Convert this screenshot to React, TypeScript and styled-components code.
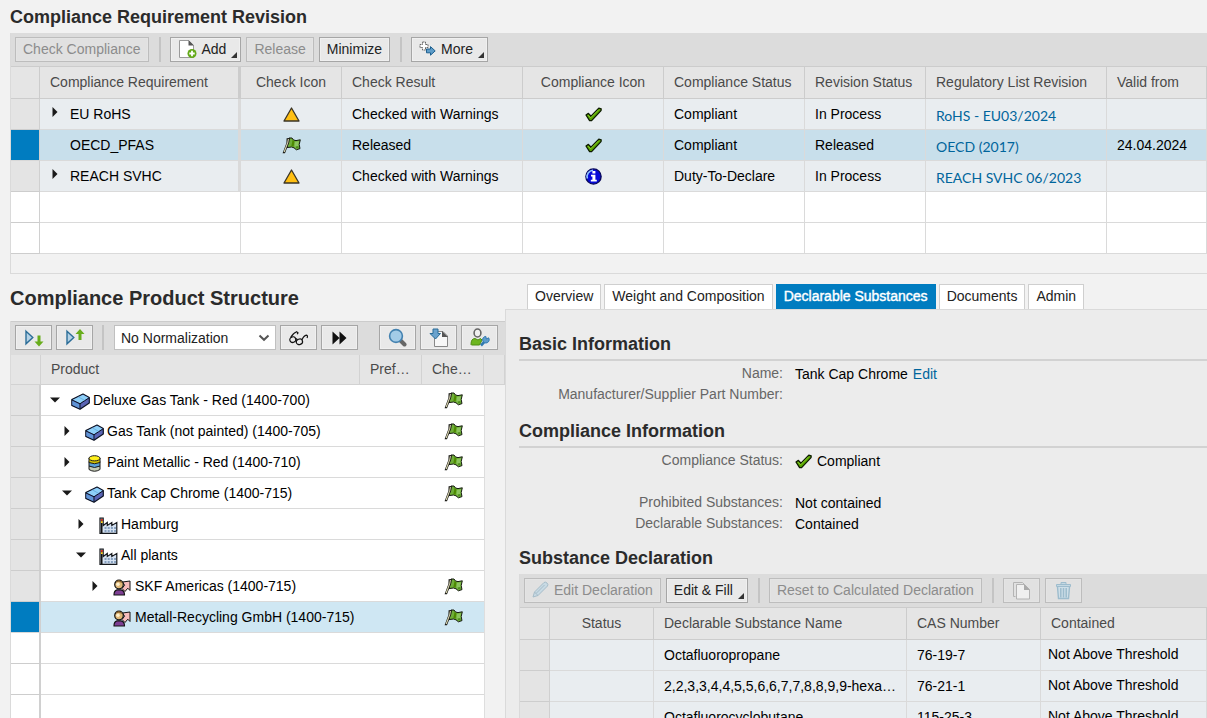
import React from 'react';
import styled, { createGlobalStyle, css } from 'styled-components';

const color = {
  page: '#f2f2f2',
  bar: '#dcdcdc',
  head: '#e5e5e5',
  row: '#e9edf0',
  line: '#dadada',
  headLine: '#cccccc',
  accent: '#007cc0',
  link: '#00659c',
  panel: '#ececec',
};

const GlobalStyle = createGlobalStyle`
  *, *::before, *::after { box-sizing: border-box; }
  body {
    margin: 0;
    background: ${color.page};
    color: #000;
    font: 14px/20px "Liberation Sans", Arial, sans-serif;
    overflow: hidden;
  }
  button, select { font: inherit; color: inherit; }
  svg { display: block; flex: none; }
`;

const Page = styled.main`
  display: flex;
  flex-direction: column;
  height: 100vh;
  padding-left: 10px;
  overflow: hidden;
`;

const Heading = styled.h2<{ $large?: boolean }>`
  margin: 0;
  color: #2b2b2b;
  font-size: ${p => (p.$large ? 20 : 18)}px;
  line-height: 24px;
  font-weight: bold;
`;

const RevisionSection = styled.section`
  flex: none;
  padding-top: 5px;
`;

const TablePanel = styled.div`
  margin-top: 4px;
  padding-bottom: 19px;
  border-left: 1px solid ${color.line};
  border-bottom: 1px solid ${color.line};
  overflow: hidden;
`;

const Toolbar = styled.div<{ $lined?: boolean }>`
  display: flex;
  align-items: center;
  gap: ${p => (p.$lined ? 4 : 5)}px;
  height: ${p => (p.$lined ? 34 : 33)}px;
  padding: ${p => (p.$lined ? '0 0 2px 4px' : '0 0 0 4px')};
  background: ${color.bar};
  border-top: ${p => (p.$lined ? `1px solid ${color.headLine}` : '0')};
`;

const Divider = styled.span`
  width: 2px;
  height: 25px;
  margin: 0 4px 0 5px;
  background: #c4c4c4;
`;

const ToolButton = styled.button<{ $icon?: boolean; $menu?: boolean }>`
  display: flex;
  flex: none;
  align-items: center;
  justify-content: center;
  gap: 5px;
  height: 25px;
  width: ${p => (p.$icon ? '37px' : 'auto')};
  padding: ${p => (p.$icon ? '0' : p.$menu ? '0 3px 2px 7px' : '0 7px 2px')};
  border: 1px solid #a6a6a6;
  border-radius: 0;
  background: #e9e9e9;
  box-shadow: inset 0 0 0 1px #f0f0f0;
  color: #222;
  white-space: nowrap;

  &:disabled {
    border-color: #bdbdbd;
    background: #e1e1e1;
    box-shadow: inset 0 0 0 1px #e4e4e4;
    color: #8c8c8c;
  }

  ${p => p.$menu && css`
    &::after {
      content: '';
      align-self: flex-end;
      margin-bottom: 1px;
      border-left: 6px solid transparent;
      border-bottom: 6px solid #333;
    }
  `}
`;

const Table = styled.table`
  width: 100%;
  border-collapse: separate;
  border-spacing: 0;
  table-layout: fixed;
`;

const HeadCell = styled.th<{ $center?: boolean; $frozen?: boolean; $tree?: boolean }>`
  height: ${p => (p.$tree ? 30 : 33)}px;
  padding: ${p => (p.$center ? '0 0 2px' : '0 10px 2px')};
  border: 0 solid ${p => (p.$tree ? '#d2d2d2' : color.headLine)};
  border-width: ${p => (p.$tree ? '0 1px 1px 0' : '1px 1px 1px 0')};
  ${p => p.$frozen && css`border-right: 3px solid ${color.headLine};`}
  background: ${color.head};
  color: #4a4a4a;
  font-weight: normal;
  text-align: ${p => (p.$center ? 'center' : 'left')};
  white-space: nowrap;
  overflow: hidden;
`;

type RowState = 'filled' | 'selected' | 'empty';

const rowFill: Record<RowState, string> = {
  filled: color.row,
  selected: '#c8dfeb',
  empty: '#fff',
};

const BodyCell = styled.td<{ $state: RowState; $frozen?: boolean; $center?: boolean; $tight?: boolean }>`
  height: 31px;
  padding: ${p => (p.$center ? '0' : p.$tight ? '0 7px 2px' : '0 10px')};
  border-right: ${p => (p.$frozen && p.$state !== 'empty' ? 3 : 1)}px solid ${color.line};
  border-bottom: 1px solid ${color.line};
  background: ${p => rowFill[p.$state]};
  white-space: nowrap;
  overflow: hidden;

  & > svg { margin: 0 auto; }
`;

const SelectorCell = styled.td<{ $state: RowState; $tree?: boolean }>`
  height: 31px;
  padding: 0;
  border-right: ${p => (p.$tree ? 2 : 1)}px solid #d0d0d0;
  border-bottom: 1px solid ${p => (p.$state === 'selected' ? '#d8d8d8' : '#cdcdcd')};
  background: ${p => (p.$state === 'selected' ? color.accent : p.$state === 'filled' ? '#e4e4e4' : '#fff')};
`;

const Expandable = styled.div`
  display: flex;
  align-items: center;
`;

const Toggle = styled.button`
  display: flex;
  align-items: center;
  justify-content: center;
  width: 10px;
  height: 16px;
  padding: 0;
  border: 0;
  background: none;
`;

const ToggleSlot = styled.span`
  display: flex;
  flex: none;
  width: 20px;
  height: 20px;
`;

const ListLink = styled.a`
  display: block;
  padding-top: 3px;
  color: ${color.link};
  font: 14px/20px Lato, Carlito, sans-serif;
  text-decoration: none;
`;

const TextLink = styled.a`
  color: ${color.link};
  text-decoration: none;
`;

const Split = styled.div`
  display: flex;
  flex: 1;
  min-height: 0;
`;

const StructureSection = styled.section`
  flex: none;
  width: 495px;
  padding-top: 12px;
`;

const StructurePanel = styled.div`
  margin-top: 11px;
  border-left: 1px solid ${color.line};
`;

const Gap = styled.span`
  width: 13px;
`;

const SelectBox = styled.label`
  display: grid;
  align-items: center;
  margin-left: 2px;
  width: 162px;
  height: 25px;

  & > select, & > svg { grid-area: 1 / 1; }
  & > svg { justify-self: end; margin-right: 6px; pointer-events: none; }
`;

const Select = styled.select`
  appearance: none;
  width: 100%;
  height: 25px;
  padding: 0 24px 0 6px;
  border: 1px solid #c0c0c0;
  border-radius: 0;
  background: #fff;
  color: #222;
`;

const TreeCell = styled.td<{ $state: RowState }>`
  height: 31px;
  padding: 0;
  border-bottom: 1px solid ${color.line};
  background: ${p => (p.$state === 'selected' ? '#cfe7f3' : '#fff')};

  & > svg { margin: 0 auto; }
`;

const GutterCell = styled.td`
  padding: 0;
  border-left: 1px solid #dedede;
`;

const TreeItem = styled.div<{ $level: number }>`
  display: flex;
  align-items: center;
  padding-left: ${p => (p.$level === 0 ? 9 : 7 + 14 * p.$level)}px;

  & > button, & > i { flex: none; width: 10px; margin-right: ${p => (p.$level === 0 ? 11 : 13)}px; }
  & > svg { margin-right: 3px; margin-top: 3px; }
`;

const DetailSection = styled.section`
  display: flex;
  flex: 1;
  flex-direction: column;
  min-width: 0;
  padding-top: 10px;
`;

const Tabs = styled.div`
  display: flex;
  gap: 3px;
  padding-left: 22px;
`;

const Tab = styled.button<{ $active?: boolean }>`
  height: 25px;
  padding: 0 7px 2px;
  border: 1px solid ${p => (p.$active ? color.accent : '#cfcfcf')};
  border-bottom-width: 0;
  background: ${p => (p.$active ? color.accent : '#fff')};
  color: ${p => (p.$active ? '#fff' : '#222')};
  -webkit-text-stroke: ${p => (p.$active ? '0.4px #fff' : '0')};
  white-space: nowrap;
`;

const DetailPanel = styled.div`
  flex: 1;
  min-height: 0;
  padding: 22px 0 0 13px;
  border: 1px solid ${color.line};
  border-width: 1px 0 0 1px;
  background: ${color.panel};
  overflow: hidden;
`;

const SectionTitle = styled(Heading)`
  height: 29px;
  border-bottom: 2px solid #d2d2d2;
`;

const Fields = styled.dl<{ $last?: boolean }>`
  display: grid;
  grid-template-columns: 264px 1fr;
  grid-auto-rows: 21px;
  column-gap: 12px;
  margin: 2px 0 ${p => (p.$last ? 12 : 14)}px;

  & > dt { color: #666; text-align: right; }
  & > dd { display: flex; align-items: center; gap: 5px; margin: 0; padding-top: 1px; }
`;

/* ---------- icons ---------- */

const RightArrow = () => (
  <svg width="6" height="10" viewBox="0 0 6 10"><path d="M0.5 0L5.5 5L0.5 10Z" fill="#1a1a1a" /></svg>
);
const DownArrow = () => (
  <svg width="10" height="6" viewBox="0 0 10 6"><path d="M0 .5H10L5 5.5Z" fill="#1a1a1a" /></svg>
);
const WarningIcon = () => (
  <svg width="17" height="15" viewBox="0 0 17 15">
    <path d="M8.5 1L16 14H1Z" fill="#ffbf12" stroke="#3a3426" strokeWidth="1.3" strokeLinejoin="round" />
  </svg>
);
const FlagIcon = () => (
  <svg width="19" height="17" viewBox="0 0 19 17">
    <path d="M7 1L10 1L11.5 3L14 3.6L18.3 2.8L17.2 7.5L18 11.6L14.4 12.8L12 10.8L9.5 10L5 10.6Z" fill="#6fae38" stroke="#151a10" strokeLinejoin="round" />
    <path d="M10.6 2.8L12.4 4.2L11.6 9.8L9.4 9Z" fill="#4d8a00" />
    <path d="M13 5L17 4.2L16.2 7.6L16.8 10.6L14.4 11.4L12.6 9.8Z" fill="#8cc55e" />
    <path d="M13.4 9.6L16.4 9L16.8 10.8L14.4 11.6Z" fill="#4f8f1c" />
    <path d="M4.6 1.2L8 1L7.4 5L3 16.2H.6L4.4 6Z" fill="#1a1a16" />
    <path d="M6.4 2L5.8 5.4L2.2 15" fill="none" stroke="#d9d5b0" strokeWidth="1.1" />
  </svg>
);
const CheckIcon = () => (
  <svg width="17" height="15" viewBox="0 0 17 15">
    <path d="M1 8L3.4 6.4L6 9.2L13.8 1.2L16.2 1.8L16 3.6L6.6 13.6L4.6 13.6Z" fill="#58a700" stroke="#0d1a00" strokeWidth="1.3" strokeLinejoin="round" />
    <path d="M3 8.2L5.6 10.8L13.8 2.6" fill="none" stroke="#8fd02c" strokeWidth="1" />
  </svg>
);
const InfoIcon = () => (
  <svg width="17" height="17" viewBox="0 0 17 17">
    <circle cx="8.5" cy="8.5" r="7.6" fill="#0508d8" stroke="#07075a" strokeWidth="1.4" />
    <path d="M2.4 10.5A6.3 6.3 0 0 1 8 2.2" fill="none" stroke="#8fc2ff" strokeWidth="1.6" />
    <path d="M7.4 3H10.4V5.4H7.4ZM6 6.8H10.4V11.8H11.8V13.4H5.8V11.8H7.4V8.4H6Z" fill="#fff" />
  </svg>
);
const AddPageIcon = () => (
  <svg width="19" height="20" viewBox="0 0 19 20">
    <path d="M1.5 1.5H10.5L15.5 6.5V18.5H1.5Z" fill="#fff" stroke="#9a9a9a" />
    <path d="M10.5 1L16 6.5H10.5Z" fill="#555" />
    <circle cx="14" cy="14.5" r="4.5" fill="#63a918" />
    <path d="M14 11.8V17.2M11.3 14.5H16.7" stroke="#fff" strokeWidth="1.8" />
  </svg>
);
const MoreIcon = () => (
  <svg width="17" height="15" viewBox="0 0 17 15">
    <path d="M3.5 1H6.5V3.5H9V6.5H6.5V9H3.5V6.5H1V3.5H3.5Z" fill="#fff" stroke="#666" strokeDasharray="2 .6" />
    <path d="M7.5 8H11.5V5.6L16.2 9.9L11.5 14.2V11.8H7.5Z" fill="#5d9cc8" stroke="#1d5f8f" />
  </svg>
);
const ExpandIcon = ({ up }: { up?: boolean }) => (
  <svg width="20" height="18" viewBox="0 0 20 18">
    <path d="M2 2.2L8.8 8.5L2 14.8Z" fill="#b4d2e6" stroke="#2b6d98" strokeWidth="1.4" />
    {up
      ? <path d="M15 0L19.5 5H16.5V11H13.5V5H10.5Z" fill="#68ad1c" />
      : <path d="M15 17.6L19.5 12.6H16.5V6.6H13.5V12.6H10.5Z" fill="#68ad1c" />}
  </svg>
);
const GlassesIcon = () => (
  <svg width="20" height="16" viewBox="0 0 20 16" fill="none" stroke="#111" strokeWidth="1.2">
    <ellipse cx="3.8" cy="9.600" rx="3" ry="2.800" transform="rotate(-30 3.8 9.6)" />
    <ellipse cx="10.400" cy="11.800" rx="3.200" ry="2.700" transform="rotate(-20 10.4 11.8)" />
    <path d="M6.4 9.400Q7.600 8 8.400 9.800M1.600 7.600Q4 3.200 7.600 1.800L9 2.800L8.200 4.200M13 9.800Q14.800 5.600 17.400 5.200Q19.200 5.600 18 8" />
  </svg>
);
const ForwardIcon = () => (
  <svg width="15" height="14" viewBox="0 0 15 14"><path d="M.5 .5L7.5 7L.5 13.5ZM7.5 .5L14.5 7L7.5 13.5Z" fill="#111" /></svg>
);
const SearchIcon = () => (
  <svg width="19" height="19" viewBox="0 0 19 19">
    <path d="M12.5 12.5L16.5 16.5" stroke="#666" strokeWidth="4" strokeLinecap="round" />
    <circle cx="8" cy="8" r="6.4" fill="#a3cbe7" stroke="#4482b0" strokeWidth="1.6" />
  </svg>
);
const ImportIcon = () => (
  <svg width="20" height="20" viewBox="0 0 20 20">
    <path d="M5.5 5.5V18.5H18.5V8L14 3.5H9" fill="#f7f7f7" stroke="#888" />
    <path d="M13 3L19 9H13Z" fill="#555" />
    <path d="M4 1H9V5.5H11.5L6.5 11L1 5.5H4Z" fill="#6ba3cd" stroke="#2b6d98" />
  </svg>
);
const PersonalizeIcon = () => (
  <svg width="20" height="19" viewBox="0 0 20 19">
    <ellipse cx="7.5" cy="5" rx="3.4" ry="4" fill="#f0f0f0" stroke="#666" strokeWidth="1.6" />
    <path d="M1 16.5Q1 10.5 5 10.5L8 12L10.5 10.5L12 12L9.5 17H1.5Z" fill="#6db51f" stroke="#4f8c12" />
    <path d="M11 17.5L15 13.2" stroke="#3079b0" strokeWidth="2.6" />
    <path d="M18.6 9.8A3.3 3.3 0 1 1 15.8 8.4L16.4 11Z" fill="#5e9ccb" stroke="#3079b0" />
  </svg>
);
const ChevronIcon = () => (
  <svg width="12" height="8" viewBox="0 0 12 8"><path d="M1.5 1.5L6 5.8L10.5 1.5" fill="none" stroke="#555" strokeWidth="2" /></svg>
);
const PencilIcon = () => (
  <svg width="17" height="17" viewBox="0 0 17 17">
    <path d="M1 16L2.5 11L12 1.5Q13.5 .5 15 2T15.5 5L6 14.5Z" fill="#c8dae4" stroke="#a6bcc8" />
    <path d="M4 12.5L12.5 4" stroke="#a6bcc8" /><path d="M2.5 11L6 14.5" stroke="#a6bcc8" />
  </svg>
);
const CopyIcon = () => (
  <svg width="19" height="19" viewBox="0 0 19 19" fill="none">
    <path d="M3.5 15.5H1.5V1.5H10.5L12 3" stroke="#b4b4b4" />
    <path d="M4.5 3.5H12.5L17.5 8.5V18H4.5Z" fill="#f0f0f0" stroke="#b4b4b4" />
    <path d="M12 3L18 9H12Z" fill="#aaa" />
  </svg>
);
const TrashIcon = () => (
  <svg width="17" height="19" viewBox="0 0 17 19" fill="none" stroke="#9dbccd">
    <path d="M1.5 5.5H15.5V3.5H1.5ZM6 3.5V1.5H11V3.5" fill="#c4d8e3" />
    <path d="M2.5 6L3.5 17.5H13.5L14.5 6" fill="#cfdfe8" strokeWidth="1.4" />
    <path d="M5.8 7V16.5M8.5 7V16.5M11.2 7V16.5" strokeWidth="1.5" />
  </svg>
);
const BoxIcon = () => (
  <svg width="19" height="17" viewBox="0 0 19 17">
    <path d="M.8 6.600L12 1L18.300 4.600V10L9 16.300L.8 12.400Z" fill="#5a64b4" stroke="#0c1424" strokeWidth="1.200" strokeLinejoin="round" />
    <path d="M1.800 6.700L12 1.700L17.400 4.800L9 10.200Z" fill="#8ed0f8" />
    <path d="M1.400 7.600L8.600 11.200V15.300L1.400 12Z" fill="#5f94d6" />
    <path d="M9 16V10.800L18 4.900M9 10.800L1 7" fill="none" stroke="#0c1424" />
    <path d="M7.500 4L13.400 7.200" stroke="#5fa9dc" strokeWidth=".8" />
  </svg>
);
const BarrelIcon = () => (
  <svg width="19" height="17" viewBox="0 0 19 17" stroke="#1c1c1c">
    <path d="M4 11V14.5Q9.5 18 15 14.5V11Z" fill="#c4cbb4" />
    <path d="M4 6.5V11Q9.5 14 15 11V6.5Z" fill="#5ba0d8" />
    <path d="M4 3V7.5Q9.5 10 15 7.5V3Z" fill="#d6c400" />
    <ellipse cx="9.5" cy="3.3" rx="5.5" ry="2.6" fill="#fff01c" />
  </svg>
);
const FactoryIcon = () => (
  <svg width="19" height="17" viewBox="0 0 19 17">
    <path d="M1 16.4V1H4.2V8.5L8.3 5.5V8.5L12.8 5.5V8.5L17.8 5.5V16.4Z" fill="#d5e2f2" stroke="#15181c" strokeWidth="1.2" />
    <path d="M2.7 1.6V16" stroke="#111" strokeWidth="1.6" />
    <path d="M2.8 2V3.8" stroke="#e6321e" strokeWidth="1.8" />
    <path d="M2.8 4.2V6" stroke="#ffd21c" strokeWidth="1.8" />
    <path d="M5.5 11H17M5.5 14H17" stroke="#6d8aae" strokeWidth="1.6" strokeDasharray="2 1.2" />
  </svg>
);
const SupplierIcon = () => (
  <svg width="19" height="17" viewBox="0 0 19 17" stroke="#141414" strokeLinejoin="round">
    <path d="M9.5 3L17 2V11.5L14.8 9.200L12 12.500L9 9.500L11.600 6.200Z" fill="#f7bcbc" />
    <path d="M1 16Q1 11.500 4 10.800H8Q11.500 11.500 11.500 16Z" fill="#7e3f94" strokeWidth="1.2" />
    <circle cx="6" cy="5.500" r="4.300" fill="#e0b878" strokeWidth="1.2" />
    <path d="M3.400 3Q6 .8 8.800 3.400" fill="none" stroke="#8a6430" strokeWidth="1.3" />
    <circle cx="5" cy="5.200" r="1.700" fill="#fff0cc" stroke="none" />
  </svg>
);

/* ---------- data ---------- */

type Revision = {
  name: string; expandable?: boolean; check: React.ReactNode; result: string;
  compliance: React.ReactNode; status: string; revision: string; list: string; valid: string; selected?: boolean;
};

const revisions: Revision[] = [
  { name: 'EU RoHS', expandable: true, check: <WarningIcon />, result: 'Checked with Warnings', compliance: <CheckIcon />, status: 'Compliant', revision: 'In Process', list: 'RoHS - EU03/2024', valid: '' },
  { name: 'OECD_PFAS', check: <FlagIcon />, result: 'Released', compliance: <CheckIcon />, status: 'Compliant', revision: 'Released', list: 'OECD (2017)', valid: '24.04.2024', selected: true },
  { name: 'REACH SVHC', expandable: true, check: <WarningIcon />, result: 'Checked with Warnings', compliance: <InfoIcon />, status: 'Duty-To-Declare', revision: 'In Process', list: 'REACH SVHC 06/2023', valid: '' },
];

type Node = { label: string; level: number; icon: React.ReactNode; open?: boolean; leaf?: boolean; flag?: boolean; selected?: boolean };

const nodes: Node[] = [
  { label: 'Deluxe Gas Tank - Red (1400-700)', level: 0, icon: <BoxIcon />, open: true, flag: true },
  { label: 'Gas Tank (not painted) (1400-705)', level: 1, icon: <BoxIcon />, flag: true },
  { label: 'Paint Metallic - Red (1400-710)', level: 1, icon: <BarrelIcon />, flag: true },
  { label: 'Tank Cap Chrome (1400-715)', level: 1, icon: <BoxIcon />, open: true, flag: true },
  { label: 'Hamburg', level: 2, icon: <FactoryIcon /> },
  { label: 'All plants', level: 2, icon: <FactoryIcon />, open: true },
  { label: 'SKF Americas (1400-715)', level: 3, icon: <SupplierIcon />, flag: true },
  { label: 'Metall-Recycling GmbH (1400-715)', level: 3, icon: <SupplierIcon />, leaf: true, flag: true, selected: true },
];

const substances = [
  { name: 'Octafluoropropane', cas: '76-19-7' },
  { name: '2,2,3,3,4,4,5,5,6,6,7,7,8,8,9,9-hexa…', cas: '76-21-1' },
  { name: 'Octafluorocyclobutane', cas: '115-25-3' },
];

const tabs = ['Overview', 'Weight and Composition', 'Declarable Substances', 'Documents', 'Admin'];

/* ---------- sections ---------- */

function RevisionTable() {
  return (
    <Table>
      <colgroup>
        <col style={{ width: 29 }} /><col style={{ width: 201 }} /><col style={{ width: 101 }} />
        <col style={{ width: 181 }} /><col style={{ width: 141 }} /><col style={{ width: 141 }} />
        <col style={{ width: 121 }} /><col style={{ width: 181 }} /><col />
      </colgroup>
      <thead>
        <tr>
          <HeadCell aria-label="Selection" />
          <HeadCell $frozen>Compliance Requirement</HeadCell>
          <HeadCell $center>Check Icon</HeadCell>
          <HeadCell>Check Result</HeadCell>
          <HeadCell $center>Compliance Icon</HeadCell>
          <HeadCell>Compliance Status</HeadCell>
          <HeadCell>Revision Status</HeadCell>
          <HeadCell>Regulatory List Revision</HeadCell>
          <HeadCell>Valid from</HeadCell>
        </tr>
      </thead>
      <tbody>
        {revisions.map(r => {
          const s: RowState = r.selected ? 'selected' : 'filled';
          return (
            <tr key={r.name}>
              <SelectorCell $state={s} />
              <BodyCell $state={s} $frozen>
                <Expandable>
                  <ToggleSlot>{r.expandable && <Toggle aria-label={`Expand ${r.name}`}><RightArrow /></Toggle>}</ToggleSlot>
                  {r.name}
                </Expandable>
              </BodyCell>
              <BodyCell $state={s} $center>{r.check}</BodyCell>
              <BodyCell $state={s}>{r.result}</BodyCell>
              <BodyCell $state={s} $center>{r.compliance}</BodyCell>
              <BodyCell $state={s}>{r.status}</BodyCell>
              <BodyCell $state={s}>{r.revision}</BodyCell>
              <BodyCell $state={s}><ListLink href="#list">{r.list}</ListLink></BodyCell>
              <BodyCell $state={s}>{r.valid}</BodyCell>
            </tr>
          );
        })}
        {[0, 1].map(i => (
          <tr key={i}>
            <SelectorCell $state="empty" />
            {Array.from({ length: 8 }, (_, c) => <BodyCell key={c} $state="empty" />)}
          </tr>
        ))}
      </tbody>
    </Table>
  );
}

function StructureTable() {
  return (
    <Table>
      <colgroup>
        <col style={{ width: 30 }} /><col /><col style={{ width: 62 }} /><col style={{ width: 62 }} /><col style={{ width: 21 }} />
      </colgroup>
      <thead>
        <tr>
          <HeadCell $tree aria-label="Selection" />
          <HeadCell $tree>Product</HeadCell>
          <HeadCell $tree>Pref…</HeadCell>
          <HeadCell $tree>Che…</HeadCell>
          <HeadCell $tree aria-label="Scroll" />
        </tr>
      </thead>
      <tbody>
        {nodes.map(n => {
          const s: RowState = n.selected ? 'selected' : 'filled';
          return (
            <tr key={n.label}>
              <SelectorCell $state={s} $tree />
              <TreeCell $state={s}>
                <TreeItem $level={n.level}>
                  {n.leaf ? <i /> : <Toggle aria-label={`Toggle ${n.label}`}>{n.open ? <DownArrow /> : <RightArrow />}</Toggle>}
                  {n.icon}
                  {n.label}
                </TreeItem>
              </TreeCell>
              <TreeCell $state={s} />
              <TreeCell $state={s}>{n.flag && <FlagIcon />}</TreeCell>
              <GutterCell />
            </tr>
          );
        })}
        {[0, 1, 2].map(i => (
          <tr key={i}>
            <SelectorCell $state="empty" $tree />
            <TreeCell $state="empty" /><TreeCell $state="empty" /><TreeCell $state="empty" />
            <GutterCell />
          </tr>
        ))}
      </tbody>
    </Table>
  );
}

function SubstanceTable() {
  return (
    <Table>
      <colgroup>
        <col style={{ width: 30 }} /><col style={{ width: 104 }} /><col style={{ width: 253 }} />
        <col style={{ width: 134 }} /><col />
      </colgroup>
      <thead>
        <tr>
          <HeadCell aria-label="Selection" />
          <HeadCell $center>Status</HeadCell>
          <HeadCell>Declarable Substance Name</HeadCell>
          <HeadCell>CAS Number</HeadCell>
          <HeadCell>Contained</HeadCell>
        </tr>
      </thead>
      <tbody>
        {substances.map(s => (
          <tr key={s.cas}>
            <SelectorCell $state="filled" />
            <BodyCell $state="filled" />
            <BodyCell $state="filled">{s.name}</BodyCell>
            <BodyCell $state="filled">{s.cas}</BodyCell>
            <BodyCell $state="filled" $tight>Not Above Threshold</BodyCell>
          </tr>
        ))}
      </tbody>
    </Table>
  );
}

export default function App() {
  return (
    <>
      <GlobalStyle />
      <Page>
        <RevisionSection>
          <Heading>Compliance Requirement Revision</Heading>
          <TablePanel>
            <Toolbar>
              <ToolButton disabled>Check Compliance</ToolButton>
              <Divider />
              <ToolButton $menu><AddPageIcon />Add</ToolButton>
              <ToolButton disabled>Release</ToolButton>
              <ToolButton>Minimize</ToolButton>
              <Divider />
              <ToolButton $menu><MoreIcon />More</ToolButton>
            </Toolbar>
            <RevisionTable />
          </TablePanel>
        </RevisionSection>

        <Split>
          <StructureSection>
            <Heading $large>Compliance Product Structure</Heading>
            <StructurePanel>
              <Toolbar $lined>
                <ToolButton $icon aria-label="Expand all"><ExpandIcon /></ToolButton>
                <ToolButton $icon aria-label="Collapse all"><ExpandIcon up /></ToolButton>
                <Divider />
                <SelectBox>
                  <Select aria-label="Normalization" defaultValue="none">
                    <option value="none">No Normalization</option>
                  </Select>
                  <ChevronIcon />
                </SelectBox>
                <ToolButton $icon aria-label="Display"><GlassesIcon /></ToolButton>
                <ToolButton $icon aria-label="Next"><ForwardIcon /></ToolButton>
                <Gap />
                <ToolButton $icon aria-label="Search"><SearchIcon /></ToolButton>
                <ToolButton $icon aria-label="Import"><ImportIcon /></ToolButton>
                <ToolButton $icon aria-label="Personalize"><PersonalizeIcon /></ToolButton>
              </Toolbar>
              <StructureTable />
            </StructurePanel>
          </StructureSection>

          <DetailSection>
            <Tabs role="tablist">
              {tabs.map(t => (
                <Tab key={t} role="tab" aria-selected={t === 'Declarable Substances'} $active={t === 'Declarable Substances'}>{t}</Tab>
              ))}
            </Tabs>
            <DetailPanel>
              <SectionTitle>Basic Information</SectionTitle>
              <Fields>
                <dt>Name:</dt>
                <dd>Tank Cap Chrome <TextLink href="#edit">Edit</TextLink></dd>
                <dt>Manufacturer/Supplier Part Number:</dt>
                <dd />
              </Fields>
              <SectionTitle>Compliance Information</SectionTitle>
              <Fields $last>
                <dt>Compliance Status:</dt>
                <dd><CheckIcon />Compliant</dd>
                <dt /><dd />
                <dt>Prohibited Substances:</dt>
                <dd>Not contained</dd>
                <dt>Declarable Substances:</dt>
                <dd>Contained</dd>
              </Fields>
              <Heading>Substance Declaration</Heading>
              <TablePanel>
                <Toolbar>
                  <ToolButton disabled><PencilIcon />Edit Declaration</ToolButton>
                  <ToolButton $menu>Edit &amp; Fill</ToolButton>
                  <Divider />
                  <ToolButton disabled>Reset to Calculated Declaration</ToolButton>
                  <Divider />
                  <ToolButton $icon disabled aria-label="Copy"><CopyIcon /></ToolButton>
                  <ToolButton $icon disabled aria-label="Delete"><TrashIcon /></ToolButton>
                </Toolbar>
                <SubstanceTable />
              </TablePanel>
            </DetailPanel>
          </DetailSection>
        </Split>
      </Page>
    </>
  );
}
